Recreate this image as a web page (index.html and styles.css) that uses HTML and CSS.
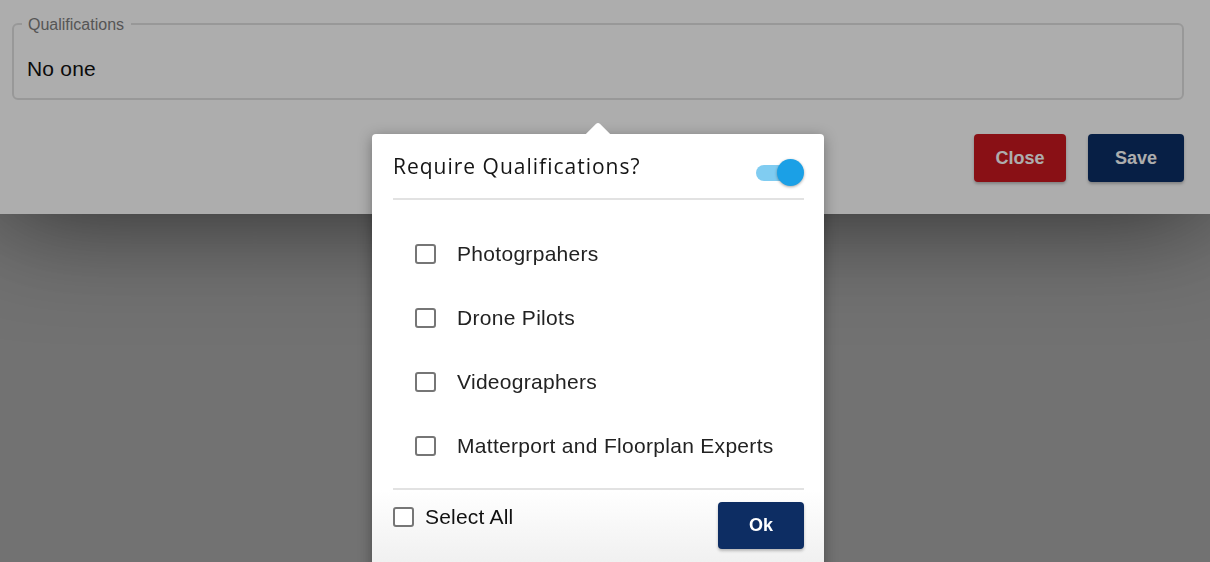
FILE: index.html
```html
<!DOCTYPE html>
<html lang="en">
<head>
<meta charset="utf-8">
<title>Qualifications</title>
<link rel="stylesheet" href="styles.css">
</head>
<body>
<div class="panel">
  <fieldset class="field">
    <legend class="field-legend"><span class="field-legend-text">Qualifications</span></legend>
    <div class="field-value">No one</div>
  </fieldset>
  <div class="actions">
    <button class="btn btn-close">Close</button>
    <button class="btn btn-save">Save</button>
  </div>
</div>
<div class="overlay"></div>

<div class="popover">
  <span class="popover-arrow"></span>
  <div class="popover-head">
    <span class="popover-title">Require Qualifications?</span>
    <span class="toggle"><span class="toggle-track"></span><span class="toggle-thumb"></span></span>
  </div>
  <div class="divider"></div>
  <ul class="options">
    <li class="option"><span class="box"></span><span class="option-label">Photogrpahers</span></li>
    <li class="option"><span class="box"></span><span class="option-label">Drone Pilots</span></li>
    <li class="option"><span class="box"></span><span class="option-label">Videographers</span></li>
    <li class="option"><span class="box"></span><span class="option-label">Matterport and Floorplan Experts</span></li>
  </ul>
  <div class="divider"></div>
  <div class="popover-foot">
    <label class="select-all"><span class="box"></span><span class="select-all-label">Select All</span></label>
    <button class="btn btn-ok">Ok</button>
  </div>
</div>
</body>
</html>
```

FILE: styles.css
```css
html, body {
  margin: 0;
  padding: 0;
  height: 100%;
  overflow: hidden;
}
body {
  background: #a8a8a8;
  font-family: "Liberation Sans", Arial, sans-serif;
  position: relative;
}
.panel {
  position: relative;
  z-index: 1;
  background: #ffffff;
  padding: 15px 26px 32px 12px;
  box-shadow: 0 0 110px rgba(0, 0, 0, 0.65);
}
.field {
  margin: 0;
  border: 2px solid #e1e1e1;
  border-radius: 6px;
  padding: 24px 13px 17px 13px;
  min-width: 0;
}
.field-legend {
  margin-left: -5px;
  padding: 0 7px 0 6px;
  font-size: 16px;
  line-height: 18px;
  color: #7e7e7e;
}
.field-legend-text {
  position: relative;
  top: 1px;
}
.field-value {
  font-size: 21px;
  line-height: 24px;
  letter-spacing: 0.2px;
  color: #111111;
}
.actions {
  display: flex;
  justify-content: flex-end;
  gap: 22px;
  margin-top: 34px;
}
.btn {
  border: none;
  border-radius: 4px;
  font-family: "Liberation Sans", Arial, sans-serif;
  font-weight: bold;
  font-size: 18px;
  color: #ffffff;
  height: 48px;
  padding: 0;
  box-shadow: 0 2px 3px rgba(0, 0, 0, 0.25);
}
.btn-close {
  width: 92px;
  background: #cb1820;
}
.btn-save {
  width: 96px;
  background: #0b2e66;
}
.overlay {
  position: fixed;
  inset: 0;
  z-index: 2;
  background: rgba(0, 0, 0, 0.32);
}
.popover {
  position: absolute;
  z-index: 3;
  left: 372px;
  top: 134px;
  width: 411px;
  padding: 0 20px 0 21px;
  background: #ffffff;
  border-radius: 4px 4px 0 0;
  box-shadow: 0 3px 14px rgba(0, 0, 0, 0.35);
}
.popover-arrow {
  position: absolute;
  left: 216px;
  top: -8px;
  width: 20px;
  height: 20px;
  background: #ffffff;
  transform: rotate(45deg);
  border-radius: 3px 0 0 0;
}
.popover-head {
  position: relative;
  height: 64px;
  display: flex;
  align-items: center;
  justify-content: space-between;
}
.popover-title {
  font-family: "Open Sans", "Noto Sans", sans-serif;
  font-size: 21px;
  color: #151515;
  letter-spacing: 1px;
}
.toggle {
  position: relative;
  width: 48px;
  height: 27px;
  margin-top: 12px;
  margin-right: 0;
}
.toggle-track {
  position: absolute;
  left: 0;
  top: 6px;
  width: 44px;
  height: 16px;
  border-radius: 8px;
  background: #80ccf1;
}
.toggle-thumb {
  position: absolute;
  right: 0;
  top: 0;
  width: 27px;
  height: 27px;
  border-radius: 50%;
  background: #1ba0e6;
  box-shadow: 0 1px 3px rgba(0, 0, 0, 0.35);
}
.divider {
  height: 2px;
  background: #e2e2e2;
}
.options {
  list-style: none;
  margin: 0;
  padding: 22px 0 10px 22px;
}
.option {
  height: 64px;
  display: flex;
  align-items: center;
  gap: 21px;
}
.box {
  box-sizing: border-box;
  width: 21px;
  height: 20px;
  border: 2px solid #767676;
  border-radius: 3px;
  background: #ffffff;
  flex: none;
}
.option-label {
  font-size: 21px;
  letter-spacing: 0.3px;
  color: #222222;
}
.popover-foot {
  display: flex;
  justify-content: space-between;
  align-items: flex-start;
  padding: 12px 20px 40px 21px;
  margin: 0 -20px 0 -21px;
  background: linear-gradient(#ffffff, #ebebeb);
}
.select-all {
  height: 30px;
  display: flex;
  align-items: center;
  gap: 11px;
}
.select-all-label {
  font-size: 21px;
  letter-spacing: 0.2px;
  color: #111111;
}
.btn-ok {
  width: 86px;
  height: 47px;
  background: #0d2d63;
  font-size: 18px;
}
```
